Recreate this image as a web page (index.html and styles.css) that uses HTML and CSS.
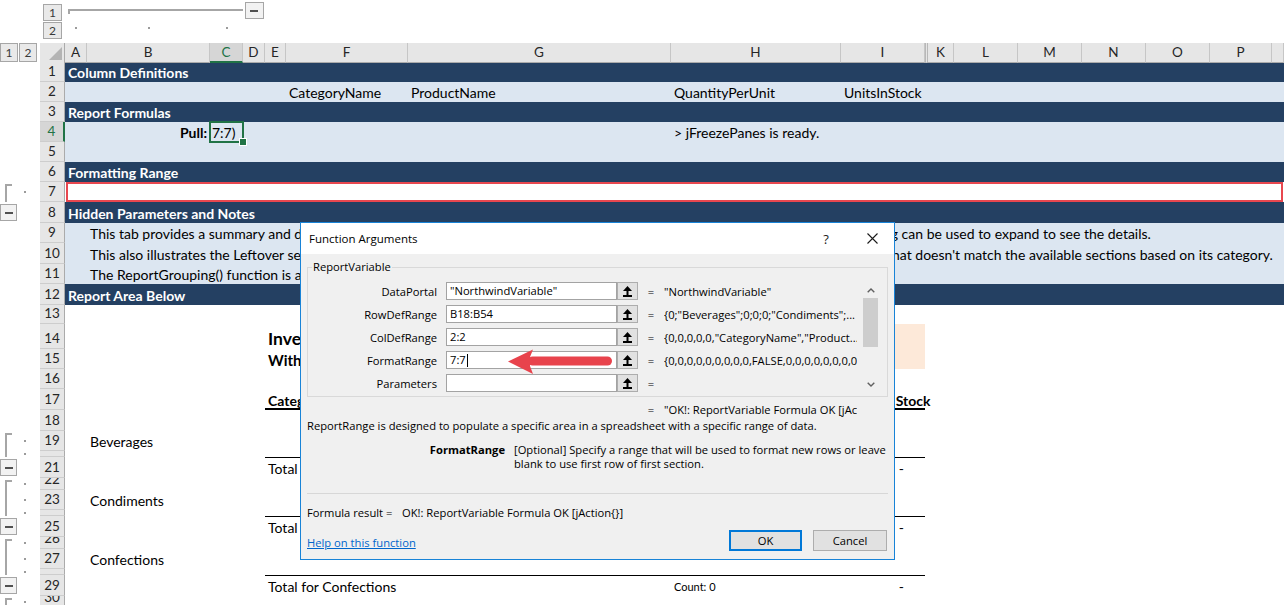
FILE: index.html
```html
<!DOCTYPE html>
<html lang="en">
<head>
<meta charset="utf-8">
<title>Report Area - Function Arguments</title>
<link rel="stylesheet" href="styles.css">
</head>
<body>
<div class="xl">
  <div class="colband">
    <div class="lvl lv1">1</div>
    <div class="hline"></div>
    <div class="omin hmin"></div>
    <div class="lvl lv2">2</div>
    <div class="hdot cA"></div>
    <div class="hdot cB"></div>
    <div class="hdot cC"></div>
  </div>

  <div class="hdr">
    <div class="lvls"><div class="lvl">1</div><div class="lvl">2</div></div>
    <div class="corner"><svg width="13" height="13" viewBox="0 0 13 13"><polygon points="13,0 13,13 0,13" fill="#b4b4b4"/></svg></div>
    <div class="ch">A</div><div class="ch">B</div><div class="ch sel">C</div><div class="ch">D</div><div class="ch">E</div>
    <div class="ch">F</div><div class="ch">G</div><div class="ch">H</div><div class="ch">I</div><div class="ch jgap">K</div>
    <div class="ch">L</div><div class="ch">M</div><div class="ch">N</div><div class="ch">O</div><div class="ch">P</div><div class="ch"></div>
  </div>

  <div class="row dark"><div class="gut"></div><div class="rh">1</div><div class="c cA b">Column Definitions</div></div>
  <div class="row light"><div class="gut"></div><div class="rh">2</div>
    <div class="c cF">CategoryName</div><div class="c cG">ProductName</div><div class="c cH">QuantityPerUnit</div><div class="c cI">UnitsInStock</div></div>
  <div class="row dark"><div class="gut"></div><div class="rh">3</div><div class="c cA b">Report Formulas</div></div>
  <div class="row light"><div class="gut"></div><div class="rh sel">4</div>
    <div class="c cB b r">Pull:</div><div class="c cC selcell">7:7)</div><div class="c cH">&gt; jFreezePanes is ready.</div></div>
  <div class="row light"><div class="gut"></div><div class="rh">5</div></div>
  <div class="row dark"><div class="gut"></div><div class="rh">6</div><div class="c cA b">Formatting Range</div></div>
  <div class="row"><div class="gut"><div class="vt"></div><div class="dot"></div></div><div class="rh">7</div><div class="redbox"></div></div>
  <div class="row dark h21"><div class="gut"><div class="omin"></div></div><div class="rh">8</div><div class="c cA b">Hidden Parameters and Notes</div></div>
  <div class="row light"><div class="gut"></div><div class="rh">9</div>
    <div class="c cB">This tab provides a summary and detailed listings of products by categories using the ReportVariable() function. The outline grouping can be used to expand to see the details.</div></div>
  <div class="row light h21"><div class="gut"></div><div class="rh">10</div>
    <div class="c cB">This also illustrates the Leftover section of the report, which is where the ReportVariable() function places any product data record that doesn't match the available sections based on its category.</div></div>
  <div class="row light"><div class="gut"></div><div class="rh">11</div>
    <div class="c cB">The ReportGrouping() function is also used to automatically create the outline groups for each of the category sections.</div></div>
  <div class="row dark h21"><div class="gut"></div><div class="rh">12</div><div class="c cA b">Report Area Below</div></div>
  <div class="row h19"><div class="gut"></div><div class="rh">13</div></div>
  <div class="row h25"><div class="gut"></div><div class="rh">14</div>
    <div class="c cE b title">Inventory Summary by Category</div><div class="cI peach"></div></div>
  <div class="row"><div class="gut"></div><div class="rh">15</div>
    <div class="c cE b sub">With Leftover Section</div><div class="cI peach"></div></div>
  <div class="row"><div class="gut"></div><div class="rh">16</div></div>
  <div class="row h21"><div class="gut"></div><div class="rh">17</div>
    <div class="span-EI bb2"></div>
    <div class="c cE b">Category</div><div class="c cG b">Product Name</div><div class="c cH b">Quantity Per Unit</div><div class="c cI b r">Units In Stock</div></div>
  <div class="row h21"><div class="gut"></div><div class="rh">18</div></div>
  <div class="row"><div class="gut"><div class="vt"></div><div class="dot"></div></div><div class="rh">19</div><div class="c cB">Beverages</div></div>
  <div class="row h6"><div class="gut"><div class="vl"></div><div class="dot"></div></div><div class="rh">20</div></div>
  <div class="row h21"><div class="gut"><div class="omin"></div></div><div class="rh">21</div>
    <div class="span-EI bt1"></div>
    <div class="c cE">Total for Beverages</div><div class="c cH small">Count: 0</div><div class="c cI r dash">-</div></div>
  <div class="row h12"><div class="gut"><div class="vt"></div><div class="dot"></div></div><div class="rh">22</div></div>
  <div class="row"><div class="gut"><div class="vl"></div><div class="dot"></div></div><div class="rh">23</div><div class="c cB">Condiments</div></div>
  <div class="row h6"><div class="gut"><div class="vl"></div><div class="dot"></div></div><div class="rh">24</div></div>
  <div class="row h21"><div class="gut"><div class="omin"></div></div><div class="rh">25</div>
    <div class="span-EI bt1"></div>
    <div class="c cE">Total for Condiments</div><div class="c cH small">Count: 0</div><div class="c cI r dash">-</div></div>
  <div class="row h12"><div class="gut"><div class="vt"></div><div class="dot"></div></div><div class="rh">26</div></div>
  <div class="row"><div class="gut"><div class="vl"></div><div class="dot"></div></div><div class="rh">27</div><div class="c cB">Confections</div></div>
  <div class="row h6"><div class="gut"><div class="vl"></div><div class="dot"></div></div><div class="rh">28</div></div>
  <div class="row h21"><div class="gut"><div class="omin"></div></div><div class="rh">29</div>
    <div class="span-EI bt1"></div>
    <div class="c cE">Total for Confections</div><div class="c cH small">Count: 0</div><div class="c cI r dash">-</div></div>
  <div class="row h12"><div class="gut"><div class="vt"></div><div class="dot"></div></div><div class="rh">30</div></div>

  <div class="dlg">
    <div class="dlg-title">
      <span>Function Arguments</span>
      <span class="dlg-help">?</span>
      <span class="dlg-close"><svg width="11" height="11" viewBox="0 0 11 11"><path d="M0.5 0.5 L10.5 10.5 M10.5 0.5 L0.5 10.5" stroke="#1a1a1a" stroke-width="1.1"/></svg></span>
    </div>
    <div class="dlg-body">
      <fieldset class="grp">
        <legend>ReportVariable</legend>
        <div class="grp-inner">
          <div class="args">
            <div class="arg"><span class="lbl">DataPortal</span><div class="inp">"NorthwindVariable"</div><div class="ref"><svg width="9" height="11" viewBox="0 0 9 11"><polygon points="0,5 4.5,0 9,5" fill="#000"/><rect x="3.5" y="4" width="2" height="5" fill="#000"/><rect x="0" y="9" width="9" height="2" fill="#000"/></svg></div><span class="eq">=</span><span class="val">"NorthwindVariable"</span></div>
            <div class="arg"><span class="lbl">RowDefRange</span><div class="inp">B18:B54</div><div class="ref"><svg width="9" height="11" viewBox="0 0 9 11"><polygon points="0,5 4.5,0 9,5" fill="#000"/><rect x="3.5" y="4" width="2" height="5" fill="#000"/><rect x="0" y="9" width="9" height="2" fill="#000"/></svg></div><span class="eq">=</span><span class="val">{0;"Beverages";0;0;0;"Condiments";...</span></div>
            <div class="arg"><span class="lbl">ColDefRange</span><div class="inp">2:2</div><div class="ref"><svg width="9" height="11" viewBox="0 0 9 11"><polygon points="0,5 4.5,0 9,5" fill="#000"/><rect x="3.5" y="4" width="2" height="5" fill="#000"/><rect x="0" y="9" width="9" height="2" fill="#000"/></svg></div><span class="eq">=</span><span class="val">{0,0,0,0,0,"CategoryName","Product...</span></div>
            <div class="arg"><span class="lbl">FormatRange</span><div class="inp">7:7<span class="caret"></span></div><div class="ref"><svg width="9" height="11" viewBox="0 0 9 11"><polygon points="0,5 4.5,0 9,5" fill="#000"/><rect x="3.5" y="4" width="2" height="5" fill="#000"/><rect x="0" y="9" width="9" height="2" fill="#000"/></svg></div><span class="eq">=</span><span class="val">{0,0,0,0,0,0,0,0,0,FALSE,0,0,0,0,0,0,0,0,0,0</span></div>
            <div class="arg"><span class="lbl">Parameters</span><div class="inp"></div><div class="ref"><svg width="9" height="11" viewBox="0 0 9 11"><polygon points="0,5 4.5,0 9,5" fill="#000"/><rect x="3.5" y="4" width="2" height="5" fill="#000"/><rect x="0" y="9" width="9" height="2" fill="#000"/></svg></div><span class="eq">=</span><span class="val"></span></div>
          </div>
          <div class="vs">
            <div class="vs-btn"><svg width="8" height="5" viewBox="0 0 8 5"><polyline points="0.7,4.3 4,1 7.3,4.3" fill="none" stroke="#606060" stroke-width="1.4"/></svg></div>
            <div class="vs-thumb"></div>
            <div class="vs-fill"></div>
            <div class="vs-btn"><svg width="8" height="5" viewBox="0 0 8 5"><polyline points="0.7,0.7 4,4 7.3,0.7" fill="none" stroke="#606060" stroke-width="1.4"/></svg></div>
          </div>
        </div>
      </fieldset>
      <div class="resline"><span class="eq">=</span><span class="val">"OK!: ReportVariable Formula OK [jAction{}]"</span></div>
      <p class="desc">ReportRange is designed to populate a specific area in a spreadsheet with a specific range of data.</p>
      <div class="argd"><b>FormatRange</b><p>[Optional] Specify a range that will be used to format new rows or leave blank to use first row of first section.</p></div>
      <div class="sep"></div>
      <div class="fres"><span class="fres-l">Formula result =</span><span>OK!: ReportVariable Formula OK [jAction{}]</span></div>
      <div class="foot">
        <a class="help" href="#">Help on this function</a>
        <button class="btn ok" type="button">OK</button>
        <button class="btn" type="button">Cancel</button>
      </div>
    </div>
  </div>

  <svg class="arrow" width="110" height="30" viewBox="0 0 110 30">
    <rect x="23" y="10.5" width="84" height="9" rx="4.5" fill="#e8434c"/>
    <polygon points="3,15.5 28,3.5 25,11 25,20 28,28" fill="#e8434c"/>
  </svg>
</div>
</body>
</html>
```

FILE: styles.css
```css
*{box-sizing:border-box}
html,body{margin:0;padding:0}
body{background:#fff;font-family:Lato,"Liberation Sans",sans-serif;color:#000}

.xl{
  position:relative;width:1284px;height:605px;overflow:hidden;font-size:14px;
  --cols:40px 25px 22px 123px 33px 22px 21px 122px 263px 170px 84px 29px 64px 64px 64px 64px 62px minmax(0,1fr);
}

.cA{grid-column:3}.cB{grid-column:4}.cC{grid-column:5}.cD{grid-column:6}.cE{grid-column:7}
.cF{grid-column:8}.cG{grid-column:9}.cH{grid-column:10}.cI{grid-column:11}
.span-EI{grid-column:7/12}

/* column outline band */
.colband{display:grid;grid-template-columns:var(--cols);grid-template-rows:21px 22px}
.lvl{width:19px;height:17px;border:1px solid #a6a6a6;background:#e9e9e9;color:#3a3a3a;font-size:12px;line-height:15px;text-align:center}
.colband .lv1{grid-column:2;grid-row:1;justify-self:center;align-self:end}
.colband .lv2{grid-column:2;grid-row:2;justify-self:center;align-self:start;margin-top:1px}
.hline{grid-column:3/6;grid-row:1;align-self:start;margin:9px 0 0 3px;height:5px;border-top:2px solid #a6a6a6;border-left:2px solid #a6a6a6}
.colband .hmin{grid-column:6;grid-row:1;justify-self:center;align-self:start;margin-top:2px;width:19px}
.colband .hdot{grid-row:2;justify-self:center;align-self:start;margin-top:6px;width:2px;height:2px;background:#9b9b9b}

/* column headers */
.hdr{display:grid;grid-template-columns:var(--cols);height:19px;font-size:13.5px}
.lvls{display:flex;background:#fff}
.lvls .lvl{width:18px;height:19px;line-height:17px}
.lvls .lvl + .lvl{margin-left:1px}
.corner{background:#e6e6e6;border-right:1px solid #ababab;border-bottom:1px solid #ababab;display:flex;align-items:flex-end;justify-content:flex-end;padding:0 2px 2px 0}
.ch{background:#e6e6e6;border-right:1px solid #c6c6c6;border-bottom:1px solid #ababab;text-align:center;line-height:19px;color:#262626}
.ch.sel{background:#d6d6d6;color:#217346;border-bottom:2px solid #217346;line-height:18px}
.ch.jgap{border-left:3px double #b8b8b8}

/* rows */
.row{display:grid;grid-template-columns:var(--cols);height:20px}
.row>*{grid-row:1;min-width:0}
.h6{height:6px}.h12{height:12px}.h19{height:19px}.h21{height:21px}.h25{height:25px}
.dark{background:#244062;color:#fff}
.light{background:#dce6f1}

.gut{grid-column:1;background:#fff;display:grid;grid-template-columns:5px 7px 12px 2px 1fr}
.gut>*{grid-row:1}
.vt{grid-column:2;border-left:2px solid #a6a6a6;border-top:2px solid #a6a6a6;margin-top:2px}
.vl{grid-column:2;border-left:2px solid #a6a6a6}
.dot{grid-column:4;align-self:center;width:2px;height:2px;background:#9b9b9b}
.omin{width:17px;height:17px;border:1px solid #a6a6a6;background:#f2f2f2;display:flex;align-items:center;justify-content:center}
.omin::before{content:"";width:8px;height:2px;background:#505050}
.gut .omin{grid-column:1/5;align-self:center}

.rh{grid-column:2;background:#e6e6e6;border-right:1px solid #ababab;border-bottom:1px solid #cdcdcd;display:flex;align-items:flex-end;justify-content:center;overflow:hidden;line-height:19px;color:#262626;font-size:13.5px}
.rh.sel{background:#d6d6d6;color:#217346;border-right:2px solid #217346}

.c{padding:0 3px;white-space:nowrap;line-height:18px;align-self:end}
.r{text-align:right}
.b{font-weight:700}
.title{font-size:17.5px;line-height:20px}
.sub{font-size:15px}
.small{font-size:11px}
.dash{padding-right:21px}
.peach{background:#fde9d9}
.bb2{border-bottom:2px solid #000}
.bt1{border-top:1px solid #000}

.selcell{position:relative;z-index:2;align-self:stretch;padding:2px 0 0 2px;outline:2px solid #217346;outline-offset:-1px}
.selcell::after{content:"";position:absolute;right:-4px;bottom:-4px;width:6px;height:6px;background:#217346;border:1px solid #fff}

.redbox{grid-column:3/-1;margin:0 1px;border:2px solid #e8474f;background:#fff}

/* dialog */
.dlg{position:absolute;left:300px;top:222px;width:595px;height:338px;border:1px solid #1883d7;background:#f0f0f0;
  font-family:"Open Sans","Noto Sans",sans-serif;font-size:11.2px;color:#000;z-index:5}
.dlg-title{height:31px;background:#fff;display:flex;align-items:center;padding:0 12px 0 8px;font-size:11.5px}
.dlg-help{margin-left:auto;width:20px;text-align:center;font-size:13px;color:#1a1a1a}
.dlg-close{margin-left:26px;width:20px;display:flex;justify-content:center}
.dlg-body{padding:0 6px}

.grp{margin:5px 0 0;padding:7px 9px 4px 0;border:1px solid #d9d9d9;width:581px;min-width:0}
.grp legend{margin-left:4px;padding:0 1px;line-height:16px}
.grp-inner{display:flex}
.args{display:flex;flex-direction:column;gap:5px}
.arg{display:flex;align-items:center;height:18px}
.lbl{width:129px;margin-right:9px;text-align:right;white-space:nowrap}
.inp{width:171px;height:18px;border:1px solid #a3a3a3;background:#fff;padding-left:3px;line-height:16px;white-space:nowrap;display:flex;align-items:center}
.caret{display:inline-block;width:1px;height:13px;background:#000;margin-left:1px}
.ref{width:21px;height:18px;border:1px solid #adadad;background:#e1e1e1;display:flex;align-items:center;justify-content:center}
.eq{width:26px;text-align:center;flex:none}
.val{width:193px;overflow:hidden;white-space:nowrap;flex:none}
.vs{width:15px;margin-left:6px;display:flex;flex-direction:column;background:#f0f0f0}
.vs-btn{height:16px;display:flex;align-items:center;justify-content:center;flex:none}
.vs-thumb{height:49px;background:#cdcdcd;flex:none}
.vs-fill{flex:1}

.resline{display:flex;height:16px;line-height:16px;margin-top:5px;padding-left:331px}
.desc{margin:0;line-height:16px;white-space:nowrap}
.argd{display:flex;margin-top:9px;line-height:14px}
.argd b{width:198px;flex:none;text-align:right;font-weight:700}
.argd p{margin:0 0 0 9px;width:374px}
.sep{margin-top:22px;height:1px;background:#d7d7d7}
.fres{margin-top:11px;line-height:16px;white-space:nowrap}
.fres-l{display:inline-block;width:95px}
.foot{display:flex;align-items:center;height:21px;margin-top:9px;margin-right:1px}
.help{color:#0066cc;text-decoration:underline;margin-top:3px}
.btn{font:inherit;color:#000;background:#e1e1e1;border:1px solid #adadad;height:21px;width:74px;margin-left:11px;padding:0}
.btn.ok{margin-left:auto;width:73px;border:2px solid #0078d7}

.arrow{position:absolute;left:505px;top:346px;z-index:6}
```
